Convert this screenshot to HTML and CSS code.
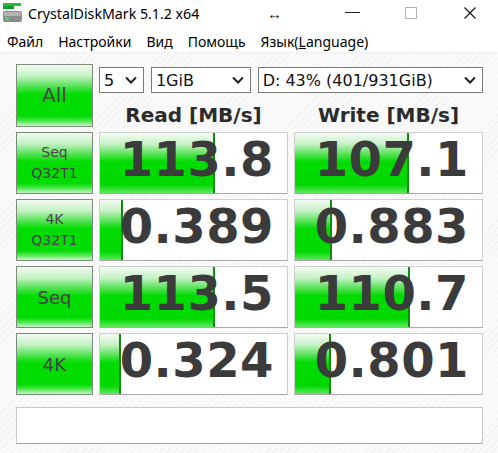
FILE: index.html
```html
<!DOCTYPE html>
<html lang="ru">
<head>
  <meta charset="UTF-8">
  <title>CrystalDiskMark 5.1.2 x64</title>
  <link rel="stylesheet" href="styles.css">
</head>
<body>

  <!-- Заголовок окна -->
  <div class="titlebar">
    <svg class="app-icon" width="20" height="20" viewBox="0 0 20 20">
      <rect x="0" y="0" width="18" height="3" fill="#1fbf3a"/>
      <rect x="0" y="3" width="11" height="3" fill="#0a9a2a"/>
      <rect x="0" y="8" width="19" height="11" rx="2" fill="#8c8c8c"/>
      <rect x="1" y="9" width="17" height="4" rx="1" fill="#b4b4b4"/>
      <rect x="2" y="14" width="4" height="3" fill="#3ee05a"/>
    </svg>
    <span class="title">CrystalDiskMark 5.1.2 x64</span>
    <span class="resize">&#8596;</span>
    <div class="controls">
      <span class="ctl min"></span>
      <span class="ctl max"></span>
      <svg class="ctl close" width="12" height="12" viewBox="0 0 12 12">
        <path d="M0.5 0.5 L11.5 11.5 M11.5 0.5 L0.5 11.5" stroke="#111" stroke-width="1.1"/>
      </svg>
    </div>
  </div>

  <!-- Меню -->
  <div class="menubar">
    <span>Файл</span>
    <span>Настройки</span>
    <span>Вид</span>
    <span>Помощь</span>
    <span>Язык(<u>L</u>anguage)</span>
  </div>

  <div class="main">
    <div class="grid">
      <div class="btn all">All</div>

      <div class="head">
        <div class="combos">
          <div class="combo count"><span>5</span><svg width="12" height="8" viewBox="0 0 12 8"><path d="M1 1.5 L6 6.5 L11 1.5" fill="none" stroke="#222" stroke-width="2"/></svg></div>
          <div class="combo size"><span>1GiB</span><svg width="12" height="8" viewBox="0 0 12 8"><path d="M1 1.5 L6 6.5 L11 1.5" fill="none" stroke="#222" stroke-width="2"/></svg></div>
          <div class="combo drive"><span>D: 43% (401/931GiB)</span><svg width="12" height="8" viewBox="0 0 12 8"><path d="M1 1.5 L6 6.5 L11 1.5" fill="none" stroke="#222" stroke-width="2"/></svg></div>
        </div>
        <div class="titles">
          <div>Read [MB/s]</div>
          <div>Write [MB/s]</div>
        </div>
      </div>

      <!-- Seq Q32T1 -->
      <div class="btn">Seq<br>Q32T1</div>
      <div class="cell"><div class="fill" style="width: 113px;"></div><span class="val">113.8</span></div>
      <div class="cell"><div class="fill" style="width: 112px;"></div><span class="val">107.1</span></div>

      <!-- 4K Q32T1 -->
      <div class="btn">4K<br>Q32T1</div>
      <div class="cell"><div class="fill" style="width: 21px;"></div><span class="val">0.389</span></div>
      <div class="cell"><div class="fill" style="width: 35px;"></div><span class="val">0.883</span></div>

      <!-- Seq -->
      <div class="btn big">Seq</div>
      <div class="cell"><div class="fill" style="width: 113px;"></div><span class="val">113.5</span></div>
      <div class="cell"><div class="fill" style="width: 113px;"></div><span class="val">110.7</span></div>

      <!-- 4K -->
      <div class="btn big">4K</div>
      <div class="cell"><div class="fill" style="width: 19px;"></div><span class="val">0.324</span></div>
      <div class="cell"><div class="fill" style="width: 34px;"></div><span class="val">0.801</span></div>
    </div>

    <div class="status"></div>
  </div>

</body>
</html>
```

FILE: styles.css
```css
body {
  margin: 0;
  background-color: #fff;
  font-family: "Noto Sans", "Open Sans", sans-serif;
  width: 498px;
  height: 453px;
  overflow: hidden;
}

/* Заголовок окна */
.titlebar {
  height: 30px;
  display: flex;
  align-items: center;
  background-color: #fff;
}
.app-icon {
  margin-left: 3px;
  margin-top: -4px;
}
.title {
  margin-left: 5px;
  width: 239px;
  font-size: 14.2px;
  color: #000;
  margin-top: -3px;
}
.resize {
  font-size: 15px;
  color: #222;
  margin-top: -5px;
}
.controls {
  display: flex;
  align-items: center;
  margin-left: auto;
  margin-top: -5px;
}
.ctl {
  display: block;
}
.min {
  width: 15px;
  height: 1px;
  background-color: #222;
  margin-right: 45px;
}
.max {
  width: 10px;
  height: 10px;
  border: 1px solid #b0b0b0;
  margin-right: 47px;
}
.close {
  margin-right: 22px;
}

/* Меню */
.menubar {
  height: 22px;
  display: flex;
  align-items: center;
  padding-left: 7px;
  gap: 15px;
  font-size: 14px;
  color: #000;
  border-bottom: 1px solid #f0f0f0;
}

/* Основная область */
.main {
  height: 400px;
  padding: 11px 15px 0 16px;
  box-sizing: border-box;
  background-color: #f9f9f9;
  background-image: repeating-linear-gradient(-45deg, #fafafa 0, #fafafa 4px, #f3f3f3 4px, #f3f3f3 5px);
}
.grid {
  display: grid;
  grid-template-columns: 77px 189px 189px;
  grid-template-rows: 63px repeat(4, 62px);
  column-gap: 6px;
  row-gap: 5px;
}

/* Кнопки тестов */
.btn {
  box-sizing: border-box;
  border: 1px solid #7c8c7c;
  background: linear-gradient(to bottom, #f2faf2 0%, #c4f2c4 18%, #40e040 38%, #00dd00 48%, #00dc00 84%, #50e850 92%, #c8f6c8 100%);
  display: flex;
  align-items: center;
  justify-content: center;
  text-align: center;
  font-family: "DejaVu Sans", Verdana, sans-serif;
  font-size: 14px;
  line-height: 21px;
  color: #4b3f4b;
}
.btn.big {
  font-size: 18px;
}
.btn.all {
  font-size: 20px;
}

/* Выбор параметров */
.head {
  grid-column: 2 / 4;
  display: flex;
  flex-direction: column;
}
.combos {
  display: flex;
  gap: 7px;
  margin-top: 3px;
}
.combo {
  height: 26px;
  box-sizing: border-box;
  border: 1px solid #7a7a7a;
  background-color: #fff;
  display: flex;
  align-items: center;
  justify-content: space-between;
  padding: 0 6px 0 4px;
  font-family: "DejaVu Sans", Verdana, sans-serif;
  font-size: 16px;
  color: #111;
}
.combo.count {
  width: 45px;
}
.combo.size {
  width: 100px;
}
.combo.drive {
  width: 226px;
}
.titles {
  display: grid;
  grid-template-columns: 189px 189px;
  column-gap: 6px;
  margin-top: 10px;
  font-family: "DejaVu Sans", Verdana, sans-serif;
  font-weight: bold;
  font-size: 20px;
  line-height: 24px;
  color: #2b2b2b;
  text-align: center;
}

/* Результаты */
.cell {
  position: relative;
  box-sizing: border-box;
  border: 1px solid #cfcfcf;
  border-bottom-color: #a9a9a9;
  background-color: #fff;
  display: flex;
  align-items: center;
  justify-content: flex-end;
  padding: 0 13px 8px 0;
  overflow: hidden;
}
.fill {
  position: absolute;
  left: 0;
  top: 0;
  bottom: 0;
  border-right: 2px solid #128a12;
  background: linear-gradient(to bottom, #f4fbf4 0%, #c8f2c8 18%, #44e044 38%, #00dc00 48%, #00d800 86%, #60e860 100%);
}
.val {
  position: relative;
  font-family: "DejaVu Sans", Verdana, sans-serif;
  font-weight: bold;
  font-size: 48px;
  letter-spacing: 0.5px;
  color: #3b3b3b;
}

.status {
  margin-top: 12px;
  height: 37px;
  box-sizing: border-box;
  border: 1px solid #c8c8c8;
  border-bottom-color: #a4a4a4;
  background-color: #fff;
}
```
